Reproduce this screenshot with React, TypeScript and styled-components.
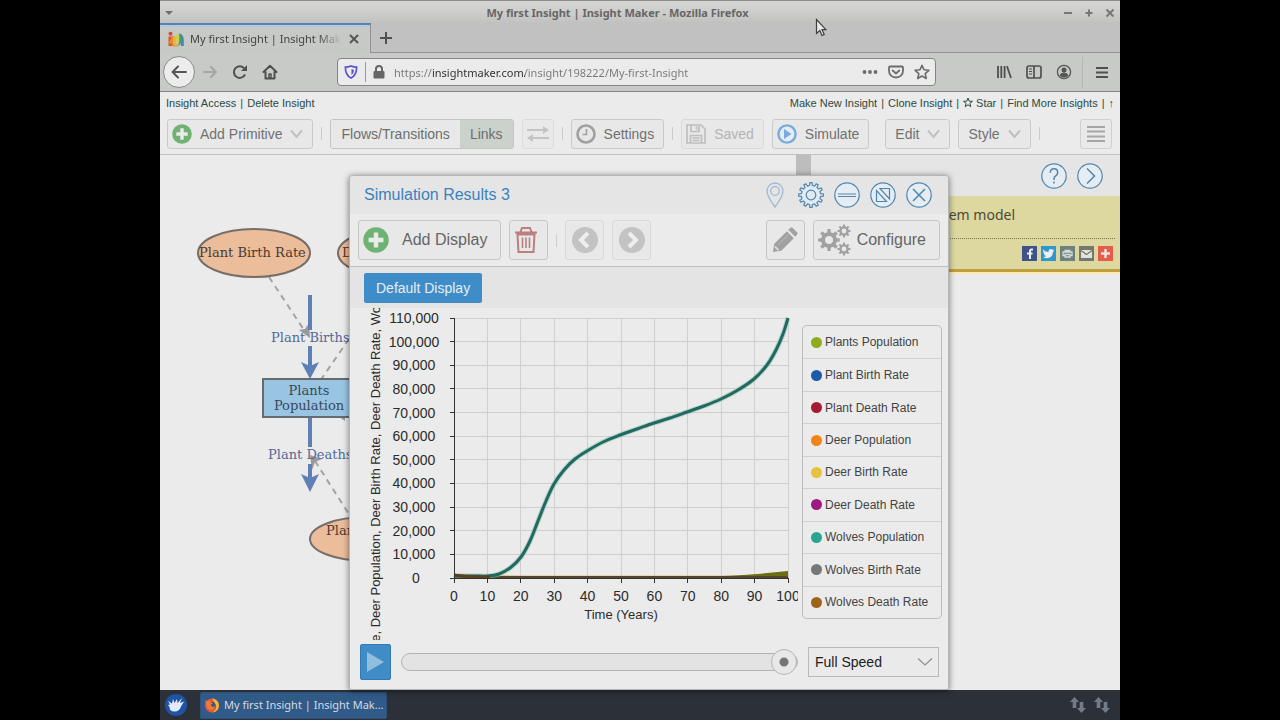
import React from "react";
import styled, { createGlobalStyle, css } from "styled-components";

const sans = '"Liberation Sans", Arial, sans-serif';
const uiSans = '"Noto Sans", "Open Sans", sans-serif';

const GlobalStyle = createGlobalStyle`
  * { box-sizing: border-box; }
  body { margin: 0; background: #000; font-family: ${sans}; overflow: hidden; }
  button, input, select { font: inherit; color: inherit; margin: 0; }
  a { color: inherit; text-decoration: none; }
  svg { display: block; flex: none; }
`;

/* ---------- screen and browser chrome ---------- */

const Screen = styled.div`
  position: relative;
  height: 100vh;
  aspect-ratio: 4 / 3;
  max-width: 100%;
  margin: 0 auto;
  background: #ebebeb;
  display: flex;
  flex-direction: column;
  overflow: hidden;
`;

const TitleBar = styled.header`
  display: flex;
  align-items: center;
  height: 23px;
  padding: 2px 4px 0 5px;
  border-top: 1px solid #8c8a8d;
  background: linear-gradient(#d6d6d3, #cbcbc9 60%, #c1c1c1);
  font: bold 11px/20px ${uiSans};
  color: #666;
`;

const WindowTitle = styled.span`
  flex: 1;
  text-align: center;
  white-space: nowrap;
`;

const WindowButtons = styled.div`
  display: flex;
  justify-content: flex-end;
  gap: 9px;
`;

const PlainButton = styled.button`
  display: flex;
  align-items: center;
  justify-content: center;
  padding: 0;
  border: 0;
  background: none;
  cursor: pointer;
`;

const TabStrip = styled.div`
  display: flex;
  height: 30px;
  background: #c0c1c0;
  border-bottom: 1px solid #929092;
`;

const BrowserTab = styled.div`
  display: flex;
  align-items: center;
  width: 211px;
  height: 30px;
  padding: 0 10px 0 8px;
  gap: 6px;
  background: #c6c9c5;
  border-top: 2px solid #5b81b4;
  border-right: 1px solid #929092;
  box-shadow: inset 0 2px 0 #b3c9dc;
`;

const TabTitle = styled.span`
  flex: 1;
  overflow: hidden;
  white-space: nowrap;
  font: 11px/20px ${uiSans};
  color: #444;
  mask-image: linear-gradient(90deg, #000 84%, transparent);
`;

const NewTab = styled(PlainButton)`
  width: 30px;
`;

const NavBar = styled.nav`
  display: flex;
  align-items: center;
  height: 39px;
  padding: 0 3px;
  background: #c7cac6;
  border-bottom: 1px solid #858386;
`;

const NavButtons = styled.div`
  display: flex;
  align-items: center;
  flex: 0 0 174px;
`;

const BackButton = styled(PlainButton)`
  width: 32px;
  height: 32px;
  border: 1px solid #8a8a8a;
  border-radius: 50%;
  background: #ececec;
`;

const NavButton = styled(PlainButton)<{ $narrow?: boolean }>`
  width: ${(p) => (p.$narrow ? 26 : 30)}px;
  height: 28px;
`;

const UrlBar = styled.div`
  flex: 1;
  display: flex;
  align-items: center;
  height: 28px;
  padding-left: 6px;
  gap: 7px;
  background: #ebebeb;
  border: 1px solid #858386;
  border-radius: 4px;
`;

const UrlDivider = styled.span`
  width: 1px;
  height: 20px;
  background: #999;
`;

const UrlInput = styled.input`
  flex: 1;
  min-width: 0;
  height: 24px;
  padding: 0 0 0 2px;
  border: 0;
  outline: 0;
  font: 11px/20px ${uiSans};
  color: transparent;
  background: linear-gradient(90deg, #777 40px, #2c2c2c 40px, #2c2c2c 133px, #777 133px);
  background-clip: text;
  -webkit-background-clip: text;
`;

const PageActions = styled.div`
  display: flex;
`;

const BrowserTools = styled.div`
  display: flex;
  align-items: center;
  flex: 0 0 181px;
  justify-content: flex-end;
`;

const ToolsDivider = styled.span`
  width: 1px;
  height: 31px;
  margin: 0 4px 0 3px;
  background: #b5b7b4;
`;

/* ---------- page ---------- */

const LinkRow = styled.div`
  display: flex;
  justify-content: space-between;
  align-items: center;
  height: 21px;
  padding: 0 6px;
  font-size: 11px;
  line-height: 16px;
  color: #2b4a41;
  white-space: nowrap;
`;

const LinkGroup = styled.div`
  display: flex;
  align-items: center;
  gap: 4px;
`;

const IconLink = styled.a`
  display: flex;
  align-items: center;
  gap: 3px;
`;

const Toolbar = styled.div`
  display: flex;
  align-items: center;
  height: 42px;
  padding: 0 8px 0 7px;
  gap: 8px;
  border-bottom: 1px solid #c0c0c0;
`;

const ToolButton = styled.button<{ $icon?: boolean; $faded?: boolean; $apart?: boolean }>`
  display: flex;
  align-items: center;
  gap: 8px;
  height: 30px;
  padding: 0 9px 0 ${(p) => (p.$icon ? 4 : 9)}px;
  margin-left: ${(p) => (p.$apart ? 8 : 0)}px;
  border: 1px solid ${(p) => (p.$faded ? "#d8dad8" : "#c9cbc9")};
  border-radius: 3px;
  background: #e8e8e8;
  font-size: 14px;
  color: ${(p) => (p.$faded ? "#b4b4b4" : "#707070")};
  white-space: nowrap;
`;

const Segments = styled.div`
  display: flex;
  border: 1px solid #c3c5c3;
  border-radius: 3px;
  overflow: hidden;
`;

const Segment = styled.button<{ $active?: boolean }>`
  height: 28px;
  padding: 0 10px;
  border: 0;
  background: ${(p) => (p.$active ? "#cbd2cb" : "#e8e8e8")};
  font-size: 14px;
  color: #6c6f6c;
`;

const SquareTool = styled.button<{ $faded?: boolean; $end?: boolean }>`
  display: flex;
  align-items: center;
  justify-content: center;
  width: 32px;
  height: 30px;
  padding: 0;
  border: 1px solid ${(p) => (p.$faded ? "#dbddd9" : "#cfd0cf")};
  border-radius: 3px;
  background: #e9e9e9;
  ${(p) => p.$end && css`margin-left: auto;`}
`;

const Rule = styled.span`
  width: 1px;
  height: 13px;
  background: #cdcdcd;
`;

const Workspace = styled.main`
  position: relative;
  flex: 1;
  min-height: 0;
  display: flex;
`;

const Canvas = styled.section`
  flex: 1;
  min-width: 0;
  overflow: hidden;
`;

const Splitter = styled.div`
  width: 15px;
  background: #bdbdbd;
`;

const SidePanel = styled.aside`
  width: 309px;
`;

const PanelTools = styled.div`
  display: flex;
  justify-content: flex-end;
  align-items: center;
  gap: 10px;
  height: 41px;
  padding: 0 17px;
  background: #e5e5e5;
`;

const RoundButton = styled(PlainButton)`
  width: 26px;
  height: 26px;
`;

const Note = styled.div`
  padding: 7px 5px 8px;
  background: #dcd8a0;
  border-bottom: 3px solid #bfa03f;
  box-shadow: 0 2px 0 #fbe9b4;
`;

const NoteText = styled.p`
  margin: 0;
  padding: 0 100px 12px 0;
  border-bottom: 1px dotted #777452;
  font: 14px/23px ${uiSans};
  text-align: right;
  color: #4d4b35;
`;

const Shares = styled.div`
  display: flex;
  justify-content: flex-end;
  gap: 4px;
  padding: 7px 2px 0;
`;

const Share = styled.a<{ $color: string }>`
  display: flex;
  align-items: center;
  justify-content: center;
  width: 15px;
  height: 15px;
  background: ${(p) => p.$color};
`;

/* ---------- results dialog ---------- */

const Dialog = styled.section`
  position: absolute;
  left: 189px;
  right: 171px;
  top: 20px;
  bottom: 0;
  display: flex;
  flex-direction: column;
  background: #ebebeb;
  border: 1px solid #b5b5b5;
  border-radius: 4px 4px 2px 2px;
  box-shadow: 0 1px 6px rgba(0, 0, 0, 0.5);
  overflow: hidden;
`;

const DialogHeader = styled.div`
  display: flex;
  justify-content: space-between;
  align-items: center;
  height: 38px;
  padding: 0 16px 0 14px;
  background: #e5e5e5;
`;

const DialogTitle = styled.h2`
  margin: 0;
  font-size: 16px;
  font-weight: normal;
  line-height: 20px;
  color: #3b82bd;
`;

const HeaderIcons = styled.div`
  display: flex;
  gap: 10px;
`;

const DialogToolbar = styled.div`
  display: flex;
  align-items: center;
  height: 53px;
  padding: 0 8px;
  gap: 8px;
  border-bottom: 1px solid #bebebe;
`;

const BigButton = styled.button<{ $gap: number }>`
  display: flex;
  align-items: center;
  gap: ${(p) => p.$gap}px;
  height: 40px;
  padding: 0 13px 0 4px;
  border: 1px solid #c7c7c7;
  border-radius: 3px;
  background: #e8e8e8;
  font-size: 16px;
  color: #666;
  white-space: nowrap;
`;

const BigSquare = styled.button<{ $faded?: boolean; $end?: boolean; $left?: boolean }>`
  display: flex;
  align-items: center;
  justify-content: ${(p) => (p.$left ? "flex-start" : "center")};
  width: 39px;
  height: 40px;
  padding: 0 ${(p) => (p.$left ? 4 : 0)}px;
  border: 1px solid ${(p) => (p.$faded ? "#dadada" : "#c7c7c7")};
  border-radius: 3px;
  background: #e8e8e8;
  ${(p) => p.$end && css`margin-left: auto;`}
`;

const DisplayTabs = styled.div`
  height: 41px;
  padding: 6px 14px;
  background: #e4e4e4;
`;

const DisplayTab = styled.button`
  height: 30px;
  padding: 0 12px;
  border: 0;
  border-radius: 2px;
  background: #3f8dc8;
  font-size: 14px;
  color: #e6eef5;
`;

const ResultArea = styled.div`
  flex: 1;
  min-height: 0;
  display: flex;
  align-items: flex-start;
  gap: 4px;
  padding: 0 6px 0 14px;
`;

const Legend = styled.ul`
  flex: 1;
  display: grid;
  grid-auto-rows: 1fr;
  height: 294px;
  margin: 17px 0 0;
  padding: 0;
  list-style: none;
  border: 1px solid #bdbdbd;
  border-radius: 5px;
`;

const LegendItem = styled.li`
  display: flex;
  align-items: center;
  gap: 3px;
  padding-left: 8px;
  font-size: 12px;
  line-height: 16px;
  color: #444;
  white-space: nowrap;
  & + & { border-top: 1px solid #d0d0d0; }
`;

const Dot = styled.span<{ $color: string }>`
  width: 11px;
  height: 11px;
  border-radius: 50%;
  background: ${(p) => p.$color};
`;

const Playback = styled.div`
  display: flex;
  align-items: center;
  height: 54px;
  padding: 0 9px 0 10px;
  gap: 10px;
`;

const PlayButton = styled(PlainButton)`
  width: 31px;
  height: 36px;
  border-radius: 2px;
  border: 1px solid #3579b0;
  background: #3f8cc6;
`;

const Slider = styled.input`
  flex: 1;
  min-width: 0;
  height: 28px;
  appearance: none;
  background: none;
  &::-webkit-slider-runnable-track {
    height: 18px;
    border: 1px solid #b3b3b3;
    border-radius: 9px;
    background: #e3e3e3;
  }
  &::-webkit-slider-thumb {
    appearance: none;
    width: 26px;
    height: 26px;
    margin-top: -5px;
    border: 1px solid #b5b5b5;
    border-radius: 50%;
    background: radial-gradient(circle, #757575 4px, #e8e8e8 5px);
  }
`;

const SpeedBox = styled.div`
  position: relative;
`;

const SpeedSelect = styled.select`
  display: block;
  width: 131px;
  height: 30px;
  padding: 0 6px;
  appearance: none;
  border: 1px solid #b9b9b9;
  border-radius: 0;
  background: #eaeaea;
  font-size: 14px;
  color: #1c1c1c;
`;

const SpeedArrow = styled.span`
  position: absolute;
  right: 6px;
  top: 10px;
  pointer-events: none;
`;

/* ---------- task bar ---------- */

const TaskBar = styled.footer`
  display: flex;
  align-items: center;
  height: 30px;
  padding: 0 10px 0 5px;
  gap: 13px;
  background: #2c3139;
`;

const TaskButton = styled.button`
  display: flex;
  align-items: center;
  gap: 4px;
  height: 27px;
  width: 187px;
  padding: 0 2px 0 3px;
  border: 1px solid #2c527b;
  border-radius: 2px;
  background: #305a88;
  font: 11px/20px ${uiSans};
  color: #d5dbe2;
  white-space: nowrap;
`;

const Tray = styled.div`
  display: flex;
  gap: 8px;
  margin-left: auto;
`;

const Pointer = styled.svg`
  position: absolute;
  left: 655px;
  top: 18px;
`;

/* ---------- drawings ---------- */

function gearPath(cx: number, cy: number, outer: number, inner: number, teeth: number) {
  const step = (Math.PI * 2) / teeth;
  const at = (r: number, a: number) =>
    `${(cx + r * Math.sin(a)).toFixed(2)} ${(cy - r * Math.cos(a)).toFixed(2)}`;
  let d = "";
  for (let i = 0; i < teeth; i++) {
    const a = i * step;
    d += `${i ? "L" : "M"}${at(inner, a - step * 0.27)}L${at(outer, a - step * 0.18)}L${at(outer, a + step * 0.18)}L${at(inner, a + step * 0.27)}`;
  }
  return d + "Z";
}

const hole = (cx: number, cy: number, r: number) =>
  `M${cx - r} ${cy}a${r} ${r} 0 1 0 ${2 * r} 0a${r} ${r} 0 1 0 ${-2 * r} 0Z`;

const Chevron = ({ w = 14, color = "#c0c0c0", stroke = 2 }) => (
  <svg width={w} height="10" viewBox={`0 0 ${w} 10`} fill="none" stroke={color} strokeWidth={stroke}>
    <path d={`M1 1.5L${w / 2} 8L${w - 1} 1.5`} />
  </svg>
);

const PlusDisc = ({ size }: { size: number }) => (
  <svg width={size} height={size} viewBox="0 0 20 20">
    <circle cx="10" cy="10" r="9.8" fill="#6fb273" />
    <path d="M10 4.3v11.4M4.3 10h11.4" stroke="#ebebeb" strokeWidth="3.4" />
  </svg>
);

const ArrowDisc = ({ flip }: { flip?: boolean }) => (
  <svg width="26" height="26" viewBox="0 0 26 26">
    <circle cx="13" cy="13" r="13" fill="#c3c3c3" />
    <path d={flip ? "M10 6l7 7-7 7" : "M16 6l-7 7 7 7"} fill="none" stroke="#eee" strokeWidth="4" />
  </svg>
);

const Ring = ({ children }: { children: React.ReactNode }) => (
  <svg width="26" height="26" viewBox="0 0 26 26" fill="none" stroke="#4f86b0" strokeWidth="1.2">
    <circle cx="13" cy="13" r="12.2" fill="#e6edf2" />
    {children}
  </svg>
);

const TrayArrows = () => (
  <svg width="16" height="16" viewBox="0 0 16 16" fill="#737b86">
    <path d="M4.5 0L9 5H6.3v6H2.700V5H0zM11.500 16L7 11h2.700V5h3.600v6H16z" />
  </svg>
);

const Diagram = () => (
  <svg width="636" height="535" viewBox="0 0 636 535" fontFamily='"DejaVu Serif", serif' fontSize="13">
    <g fill="none" stroke="#a3a3a3" strokeWidth="2" strokeDasharray="6 5">
      <path d="M109 122L146 178" />
      <path d="M189 184L160 226" />
      <path d="M155 306L194 367" />
    </g>
    <g fill="#999">
      <path d="M150 183L139 175L145 174L149 168Z" />
      <path d="M150 300L162 304L155 307L152 315Z" />
      <path d="M179 262h6v4Z" />
    </g>
    <g stroke="#5f80b5" strokeWidth="4">
      <path d="M150 140V175M150 191V212M150 262V292M150 309V324" />
    </g>
    <g fill="#5f80b5">
      <path d="M141 207L150 211L159 207L150 224Z" />
      <path d="M141 319L150 323L159 319L150 337Z" />
    </g>
    <g fill="#ebbd9b" stroke="#766e69" strokeWidth="2">
      <ellipse cx="94" cy="98" rx="56" ry="24" />
      <ellipse cx="235" cy="98" rx="57" ry="24" />
      <ellipse cx="207" cy="384" rx="57" ry="22" />
    </g>
    <rect x="103" y="224" width="93" height="38" fill="#9ac5e2" stroke="#666b70" strokeWidth="2" />
    <g fill="#4c3a2e">
      <text x="39" y="102">Plant Birth Rate</text>
      <text x="182" y="102">D</text>
      <text x="166" y="380">Plan</text>
    </g>
    <g fill="#36495a" textAnchor="middle">
      <text x="149" y="240">Plants</text>
      <text x="149" y="255">Population</text>
    </g>
    <g fill="#53699a">
      <text x="111" y="187">Plant Births</text>
      <text x="108" y="304">Plant Deaths</text>
    </g>
  </svg>
);

/* Chart geometry: plot origin, the width of 100 years and the height of 110,000 units. */
const plot = { left: 90, top: 10, width: 334, height: 260 };
const px = (year: number) => plot.left + (year / 100) * plot.width;
const py = (value: number) => plot.top + plot.height * (1 - value / 110000);

const wolves: [number, number][] = [
  [90, 268], [101, 268], [112, 268], [124, 268], [135, 266], [146, 260], [157, 249], [166, 233],
  [174, 213], [182, 193], [190, 176], [200, 162], [211, 151], [223, 143], [239, 134], [256, 127],
  [273, 121], [290, 115], [306, 110], [323, 104], [340, 98], [357, 91], [374, 82], [390, 71],
  [403, 57], [412, 42], [419, 26], [424, 10],
];

function smooth(pts: [number, number][]) {
  let d = `M${pts[0][0]} ${pts[0][1]}`;
  for (let i = 0; i < pts.length - 1; i++) {
    const a = pts[Math.max(i - 1, 0)];
    const b = pts[i];
    const c = pts[i + 1];
    const e = pts[Math.min(i + 2, pts.length - 1)];
    d += `C${b[0] + (c[0] - a[0]) / 6} ${b[1] + (c[1] - a[1]) / 6} ${c[0] - (e[0] - b[0]) / 6} ${c[1] - (e[1] - b[1]) / 6} ${c[0]} ${c[1]}`;
  }
  return d;
}

const Chart = () => {
  const years = Array.from({ length: 11 }, (_, i) => i * 10);
  const values = Array.from({ length: 12 }, (_, i) => i * 10000);
  const right = plot.left + plot.width;
  const bottom = plot.top + plot.height;
  return (
    <svg width="434" height="332" viewBox="0 0 434 332" fontFamily={sans} fontSize="14" fill="#2b2b2b">
      <text transform="translate(16 354) rotate(-90)" fontSize="13">
        Rate, Deer Population, Deer Birth Rate, Deer Death Rate, Wolves
      </text>
      <g stroke="#cfcfcf" shapeRendering="crispEdges">
        {years.map((y) => <path key={y} d={`M${px(y)} ${plot.top}V${bottom}`} />)}
        {values.map((v) => <path key={v} d={`M${plot.left} ${py(v)}H${right}`} />)}
      </g>
      <path d={`M90 267Q130 269 190 269H${right}`} fill="none" stroke="#e3bd86" strokeWidth="3" />
      <path d={`M330 269Q380 268 ${right} 263V270H330Z`} fill="#6c6e14" />
      <path d={`M90 269H${right}`} stroke="#54442c" strokeWidth="2" />
      <path d={smooth(wolves)} fill="none" stroke="#8fc4b8" strokeWidth="5" strokeOpacity="0.6" />
      <path d={smooth(wolves)} fill="none" stroke="#22695f" strokeWidth="3" />
      <path d="M90 267Q100 269 126 269" fill="none" stroke="#5c421c" strokeWidth="3" />
      <g stroke="#333" shapeRendering="crispEdges">
        <path d={`M${plot.left} ${plot.top}V${bottom}H${right}`} fill="none" />
        {years.map((y) => <path key={y} d={`M${px(y)} ${bottom}v5`} />)}
        {values.map((v) => <path key={v} d={`M${plot.left} ${py(v)}h-4`} />)}
      </g>
      <g textAnchor="middle">
        {values.map((v) => <text key={v} x={v ? 50 : 52} y={Math.round(py(v)) + 5}>{v.toLocaleString("en-US")}</text>)}
        {years.map((y) => <text key={y} x={px(y)} y="293">{y}</text>)}
        <text x="257" y="311" fontSize="13">Time (Years)</text>
      </g>
    </svg>
  );
};

const series = [
  ["Plants Population", "#8fac1c"],
  ["Plant Birth Rate", "#1d5ba8"],
  ["Plant Death Rate", "#a61a33"],
  ["Deer Population", "#ef8418"],
  ["Deer Birth Rate", "#e6c23f"],
  ["Deer Death Rate", "#9c1b80"],
  ["Wolves Population", "#2ba58f"],
  ["Wolves Birth Rate", "#777777"],
  ["Wolves Death Rate", "#9f641c"],
];

export default function App() {
  return (
    <Screen>
      <GlobalStyle />
      <TitleBar>
        <svg width="8" height="5" viewBox="0 0 8 5" fill="#707070"><path d="M0 0h8L4 4z" /></svg>
        <WindowTitle>My first Insight | Insight Maker - Mozilla Firefox</WindowTitle>
        <WindowButtons>
          <PlainButton aria-label="Minimize">
            <svg width="12" height="12" viewBox="0 0 12 12" stroke="#777" strokeWidth="2"><path d="M2 6h8" /></svg>
          </PlainButton>
          <PlainButton aria-label="Maximize">
            <svg width="12" height="12" viewBox="0 0 12 12" stroke="#777" strokeWidth="2"><path d="M2.5 6h7M6 2.5v7" /></svg>
          </PlainButton>
          <PlainButton aria-label="Close window">
            <svg width="12" height="12" viewBox="0 0 12 12" stroke="#777" strokeWidth="2"><path d="M2.5 2.5l7 7M9.5 2.5l-7 7" /></svg>
          </PlainButton>
        </WindowButtons>
      </TitleBar>

      <TabStrip>
        <BrowserTab>
          <svg width="16" height="16" viewBox="0 0 16 16">
            <circle cx="2.5" cy="2.8" r="2" fill="#cf4b33" />
            <path d="M.5 5.500h4V15h-4z" fill="#d9552c" />
            <path d="M.5 12q2 1.500 4 0V15q3 1 6 0-4 0-4-5V5H4.500" fill="#e8892b" />
            <path d="M5 6h3v5q.5 3 3 3.500-6 2-6-4z" fill="#e2b93a" />
            <path d="M8 3.500h4l-.5 9q-3.500 0-3.500-4z" fill="#cfcf52" />
            <path d="M11 2.500q4.500.5 4.500 6V15h-2.500v-3q-1 3-3.500 2.800Q12 13 11 2.500z" fill="#469b73" />
            <path d="M13.500 4q2 1.500 2 5v6h-2z" fill="#3f86b5" />
          </svg>
          <TabTitle>My first Insight | Insight Maker</TabTitle>
          <PlainButton aria-label="Close tab">
            <svg width="12" height="12" viewBox="0 0 12 12" stroke="#555" strokeWidth="2"><path d="M2 2l8 8M10 2l-8 8" /></svg>
          </PlainButton>
        </BrowserTab>
        <NewTab aria-label="New tab">
          <svg width="14" height="14" viewBox="0 0 14 14" stroke="#505050" strokeWidth="2"><path d="M7 1v12M1 7h12" /></svg>
        </NewTab>
      </TabStrip>

      <NavBar>
        <NavButtons>
          <BackButton aria-label="Back">
            <svg width="16" height="16" viewBox="0 0 16 16" fill="none" stroke="#555" strokeWidth="2" strokeLinecap="round" strokeLinejoin="round"><path d="M7 2.5L1.500 8L7 13.500M2 8h13" /></svg>
          </BackButton>
          <NavButton aria-label="Forward">
            <svg width="16" height="16" viewBox="0 0 16 16" fill="none" stroke="#a4a7a4" strokeWidth="2" strokeLinecap="round" strokeLinejoin="round"><path d="M9 3L14 8L9 13M14 8H2" /></svg>
          </NavButton>
          <NavButton aria-label="Reload">
            <svg width="16" height="16" viewBox="0 0 16 16" fill="none" stroke="#505050" strokeWidth="2"><path d="M13 10.500A5.800 5.800 0 1 1 12 4.200" /><path d="M15 1v6H9z" fill="#505050" stroke="none" /></svg>
          </NavButton>
          <NavButton aria-label="Home">
            <svg width="16" height="16" viewBox="0 0 16 16" fill="none" stroke="#505050" strokeWidth="2" strokeLinejoin="round" strokeLinecap="round"><path d="M1.500 8L8 1.800L14.500 8M3.500 8v6.500h9V8" /><path d="M7 10h2v4H7z" strokeWidth="1.500" /></svg>
          </NavButton>
        </NavButtons>
        <UrlBar>
          <svg width="14" height="14" viewBox="0 0 14 14" fill="none" stroke="#5c4fd0" strokeWidth="1.700"><path d="M7 1Q10 2.200 12.600 2.200Q12.800 10 7 13Q1.200 10 1.400 2.200Q4 2.200 7 1Z" /><path d="M7.500 4v6Q10 8 10 5z" fill="#5c4fd0" stroke="none" /></svg>
          <UrlDivider />
          <svg width="12" height="14" viewBox="0 0 12 14"><rect x="0.500" y="6" width="11" height="7.500" rx="1" fill="#666" /><path d="M3 7V4a3 3 0 0 1 6 0v3" fill="none" stroke="#666" strokeWidth="2" /></svg>
          <UrlInput aria-label="Address" defaultValue="https://insightmaker.com/insight/198222/My-first-Insight" />
          <PageActions>
            <NavButton $narrow aria-label="Page actions">
              <svg width="16" height="16" viewBox="0 0 16 16" fill="#6c6c6c"><circle cx="2.500" cy="8" r="1.900" /><circle cx="8" cy="8" r="1.900" /><circle cx="13.500" cy="8" r="1.900" /></svg>
            </NavButton>
            <NavButton $narrow aria-label="Save to Pocket">
              <svg width="16" height="16" viewBox="0 0 16 16" fill="none" stroke="#6c6c6c" strokeWidth="1.800" strokeLinecap="round"><path d="M2 2.500h12q1 0 1 1V7a7 6.500 0 0 1-14 0V3.500q0-1 1-1z" /><path d="M4.700 6.500L8 9.500l3.300-3" /></svg>
            </NavButton>
            <NavButton $narrow aria-label="Bookmark">
              <svg width="16" height="16" viewBox="0 0 16 16" fill="none" stroke="#6c6c6c" strokeWidth="1.600" strokeLinejoin="round"><path d="M8 1.300l2 4.500 4.900.5-3.700 3.300 1.100 4.900L8 12l-4.300 2.500 1.100-4.900L1.100 6.300 6 5.800z" /></svg>
            </NavButton>
          </PageActions>
        </UrlBar>
        <BrowserTools>
          <NavButton aria-label="Library">
            <svg width="16" height="16" viewBox="0 0 16 16" fill="none" stroke="#505050" strokeWidth="1.800"><path d="M2 2v12M5.300 2v12M8.600 2v12M11 2.300l4 11.700" /></svg>
          </NavButton>
          <NavButton aria-label="Sidebars">
            <svg width="16" height="16" viewBox="0 0 16 16" fill="none" stroke="#505050" strokeWidth="1.700"><rect x="1" y="2" width="14" height="12" rx="2" /><path d="M8 2v12" /><path d="M3 5h3M3 7.500h3M3 10h3" strokeWidth="1" /></svg>
          </NavButton>
          <NavButton aria-label="Account">
            <svg width="16" height="16" viewBox="0 0 16 16"><circle cx="8" cy="8" r="6.600" fill="none" stroke="#555" strokeWidth="1.300" /><circle cx="8" cy="6" r="2.500" fill="#555" /><path d="M3.500 11Q5 8.500 8 8.500T12.500 11Q11 13.500 8 13.500T3.500 11z" fill="#555" /></svg>
          </NavButton>
          <ToolsDivider />
          <NavButton aria-label="Menu">
            <svg width="12" height="14" viewBox="0 0 12 14" stroke="#505050" strokeWidth="2"><path d="M0 3h12M0 7.500h12M0 12h12" /></svg>
          </NavButton>
        </BrowserTools>
      </NavBar>

      <LinkRow>
        <LinkGroup>
          <a href="#access">Insight Access</a>|<a href="#delete">Delete Insight</a>
        </LinkGroup>
        <LinkGroup>
          <a href="#new">Make New Insight</a>|<a href="#clone">Clone Insight</a>|
          <IconLink href="#star">
            <svg width="10" height="11" viewBox="0 0 10 11" fill="none" stroke="#2b4a41"><path d="M5 1l1.200 3.200 3.300.1-2.600 2.100.9 3.200L5 7.800 2.200 9.600l.9-3.200L.5 4.300l3.300-.1z" /></svg>
            Star
          </IconLink>|<a href="#more">Find More Insights</a>|<a href="#up">↑</a>
        </LinkGroup>
      </LinkRow>

      <Toolbar>
        <ToolButton $icon><PlusDisc size={20} />Add Primitive<Chevron w={13} /></ToolButton>
        <Rule />
        <Segments>
          <Segment>Flows/Transitions</Segment>
          <Segment $active>Links</Segment>
        </Segments>
        <SquareTool $faded aria-label="Reverse">
          <svg width="24" height="18" viewBox="0 0 24 18" stroke="#c3c5c2" strokeWidth="2" fill="#c3c5c2"><path d="M1 5h17M6 13h17" /><path d="M17 1l6 4-6 4zM7 9l-6 4 6 4z" stroke="none" /></svg>
        </SquareTool>
        <Rule />
        <ToolButton $icon>
          <svg width="20" height="20" viewBox="0 0 20 20" fill="none" stroke="#a0a0a0"><circle cx="10" cy="10" r="8.500" strokeWidth="2.600" /><path d="M10.500 5v5.500H6.500" strokeWidth="1.600" /></svg>
          Settings
        </ToolButton>
        <Rule />
        <ToolButton $icon $faded>
          <svg width="20" height="20" viewBox="0 0 20 20" fill="none" stroke="#bebebe" strokeWidth="1.700"><path d="M1 1h14l4 4v14H1z" /><path d="M4.500 19v-7.500h11V19M5 1v6.500h8V1M10.500 2.500v3M6.500 14h7M6.500 16.500h7" /></svg>
          Saved
        </ToolButton>
        <ToolButton $icon>
          <svg width="20" height="20" viewBox="0 0 20 20"><circle cx="10" cy="10" r="8.600" fill="#e4ebf1" stroke="#79abdd" strokeWidth="2.400" /><path d="M7 5l7.500 5L7 15z" fill="#79abdd" /></svg>
          Simulate
        </ToolButton>
        <ToolButton $apart>Edit<Chevron w={13} /></ToolButton>
        <ToolButton>Style<Chevron w={13} /></ToolButton>
        <Rule />
        <SquareTool $end aria-label="Description">
          <svg width="18" height="18" viewBox="0 0 18 18" stroke="#a6a6a6" strokeWidth="2"><path d="M0 2h18M0 6.500h18M0 11.500h18M0 16h18" /></svg>
        </SquareTool>
      </Toolbar>

      <Workspace>
        <Canvas><Diagram /></Canvas>
        <Splitter />
        <SidePanel>
          <PanelTools>
            <RoundButton aria-label="Help">
              <Ring><path d="M9.300 9.800q0-4 3.700-4t3.700 3.700q0 2-2 3.300T13 16v1M13 18.500v2" strokeWidth="1.500" /></Ring>
            </RoundButton>
            <RoundButton aria-label="Collapse panel">
              <Ring><path d="M10 5.500l7.500 7.500-7.500 7.500" strokeWidth="1.500" /></Ring>
            </RoundButton>
          </PanelTools>
          <Note>
            <NoteText>Ecosystem model</NoteText>
            <Shares>
              <Share href="#facebook" aria-label="Facebook" $color="#3d5389">
                <svg width="15" height="15" viewBox="0 0 15 15" fill="none" stroke="#eee" strokeWidth="2"><path d="M11 3.500H9.500Q8 3.500 8 5.500V13M5 7.500h5.500" /></svg>
              </Share>
              <Share href="#twitter" aria-label="Twitter" $color="#2f96d0">
                <svg width="15" height="15" viewBox="0 0 15 15" fill="#eee"><path d="M2 3.500Q4.500 6 7.500 6Q7.200 3 9.800 3q1 0 1.700.7L13 3.300l-.8 1.500.9-.1-1.200 1.500Q11.600 12 6 12.200q-2.300 0-4-1.200 2 .1 3.200-1Q3.500 9.700 3 8.500h1Q2.200 7.500 2.200 6l1 .2Q1.500 5 2 3.500z" /></svg>
              </Share>
              <Share href="#print" aria-label="Print" $color="#6d827c">
                <svg width="15" height="15" viewBox="0 0 15 15" fill="none" stroke="#d5dcd8" strokeWidth="1.300"><path d="M4.500 4.500h6M4.500 9.500H3V6h9v3.500h-1.500M5 8.500h5V11H5z" /></svg>
              </Share>
              <Share href="#mail" aria-label="Mail" $color="#73796e">
                <svg width="15" height="15" viewBox="0 0 15 15"><path d="M2 4h11v8H2z" fill="#e2e2dc" /><path d="M2 4.500l5.500 4 5.500-4" fill="none" stroke="#73796e" strokeWidth="1.200" /></svg>
              </Share>
              <Share href="#more-sharing" aria-label="More" $color="#e65c4b">
                <svg width="15" height="15" viewBox="0 0 15 15" stroke="#f1e6de" strokeWidth="2.400"><path d="M7.500 3v9M3 7.500h9" /></svg>
              </Share>
            </Shares>
          </Note>
        </SidePanel>

        <Dialog aria-label="Simulation Results 3">
          <DialogHeader>
            <DialogTitle>Simulation Results 3</DialogTitle>
            <HeaderIcons>
              <RoundButton aria-label="Pin">
                <svg width="26" height="26" viewBox="0 0 26 26" fill="none" stroke="#9fbad3" strokeWidth="1.300"><path d="M13 25Q5 14 5 9a8 8 0 0 1 16 0q0 5-8 16z" /><circle cx="13" cy="9" r="4.300" /></svg>
              </RoundButton>
              <RoundButton aria-label="Settings">
                <svg width="26" height="26" viewBox="0 0 26 26" fill="#e3ebf1" stroke="#4f86b0" strokeWidth="1.200" strokeLinejoin="round"><path d={gearPath(13, 13, 12.4, 9.6, 12)} /><circle cx="13" cy="13" r="4.800" /></svg>
              </RoundButton>
              <RoundButton aria-label="Minimize results"><Ring><path d="M4 12h18M4 14.500h18" strokeWidth="1" /></Ring></RoundButton>
              <RoundButton aria-label="Restore results"><Ring><path d="M10 6.500h9.500V17zM6.500 8.500V19.500h10z" /></Ring></RoundButton>
              <RoundButton aria-label="Close results"><Ring><path d="M7 7l12 12M19 7L7 19" strokeWidth="1.500" /></Ring></RoundButton>
            </HeaderIcons>
          </DialogHeader>

          <DialogToolbar>
            <BigButton $gap={13}><PlusDisc size={26} />Add Display</BigButton>
            <BigSquare $left aria-label="Delete display">
              <svg width="24" height="28" viewBox="0 0 24 28" fill="none" stroke="#bb7f7f" strokeWidth="2"><path d="M1 6.500h22M6.500 6L8 2h8l1.500 4M3.500 8.500l1 17.500h15l1-17.500z" /><path d="M8.500 11.500v10.500M12 11.500v10.500M15.500 11.500v10.500" strokeWidth="1.600" /></svg>
            </BigSquare>
            <Rule />
            <BigSquare $faded aria-label="Previous display"><ArrowDisc /></BigSquare>
            <BigSquare $faded aria-label="Next display"><ArrowDisc flip /></BigSquare>
            <BigSquare $end aria-label="Edit display">
              <svg width="26" height="26" viewBox="0 0 28 28" fill="#a1a1a1"><path d="M1 27l1.500-9L16 4.500l7.500 7.500L10 25.500zM17.500 3L20 .8q1-.8 2 0l5.200 5.200q.8 1 0 2L25 10.500z" /><path d="M3 21l4 4" stroke="#d8d8d8" strokeWidth="2" /><path d="M7 19L18 8" stroke="#bdbdbd" strokeWidth="1" /></svg>
            </BigSquare>
            <BigButton $gap={6}>
              <svg width="33" height="32" viewBox="0 0 33 32" fill="#a1a1a1" fillRule="evenodd">
                <path d={gearPath(11, 16, 11, 8, 8) + hole(11, 16, 4)} />
                <path d={gearPath(26, 7, 6.6, 4.8, 8) + hole(26, 7, 2.4)} />
                <path d={gearPath(26, 25, 6.6, 4.8, 8) + hole(26, 25, 2.4)} />
              </svg>
              Configure
            </BigButton>
          </DialogToolbar>

          <DisplayTabs><DisplayTab>Default Display</DisplayTab></DisplayTabs>

          <ResultArea>
            <Chart />
            <Legend>
              {series.map(([name, color]) => (
                <LegendItem key={name}><Dot $color={color} />{name}</LegendItem>
              ))}
            </Legend>
          </ResultArea>

          <Playback>
            <PlayButton aria-label="Play">
              <svg width="19" height="22" viewBox="0 0 19 22" fill="#92bede"><path d="M1 1l17 10L1 21z" /></svg>
            </PlayButton>
            <Slider type="range" aria-label="Time" min={0} max={100} defaultValue={100} />
            <SpeedBox>
              <SpeedSelect aria-label="Speed" defaultValue="Full Speed"><option>Full Speed</option></SpeedSelect>
              <SpeedArrow><Chevron w={16} color="#8f8f8f" stroke={1.2} /></SpeedArrow>
            </SpeedBox>
          </Playback>
        </Dialog>
      </Workspace>

      <TaskBar>
        <PlainButton aria-label="Applications">
          <svg width="22" height="22" viewBox="0 0 22 22"><circle cx="11" cy="11" r="11" fill="#1e53a6" /><path d="M3 7l4 2.500L8 5l1.500 4L12 5l.5 4L17 4l-2 5 4-1.500-3 5q-1.500 5-6.500 5-5 0-5-4.500L3 11l2-.5z" fill="#e2ebf5" /></svg>
        </PlainButton>
        <TaskButton>
          <svg width="16" height="16" viewBox="0 0 16 16"><circle cx="8" cy="8.500" r="7" fill="#e8563a" /><path d="M8 1.500q7 1 7 7.500-1 6-7 6.500 5-2.500 4-7-1-3-4-7z" fill="#f4b63c" /><circle cx="8" cy="8.500" r="3.600" fill="#3b4f95" /><path d="M1 3l2 1.500L5 3q1 3 4 3.500Q7 7 7 8.500q2 2.500 4 0Q10.500 13 7 13 3 12.500 2.500 8z" fill="#ee7b34" /></svg>
          My first Insight | Insight Mak...
        </TaskButton>
        <Tray><TrayArrows /><TrayArrows /></Tray>
      </TaskBar>

      <Pointer width="12" height="19" viewBox="0 0 12 19" aria-hidden="true">
        <path d="M1.500 1.500v14l3.300-3 2.200 5 2.200-1-2.200-4.800h4z" fill="#e8e8e8" stroke="#3f3f3f" strokeWidth="1.200" />
      </Pointer>
    </Screen>
  );
}
